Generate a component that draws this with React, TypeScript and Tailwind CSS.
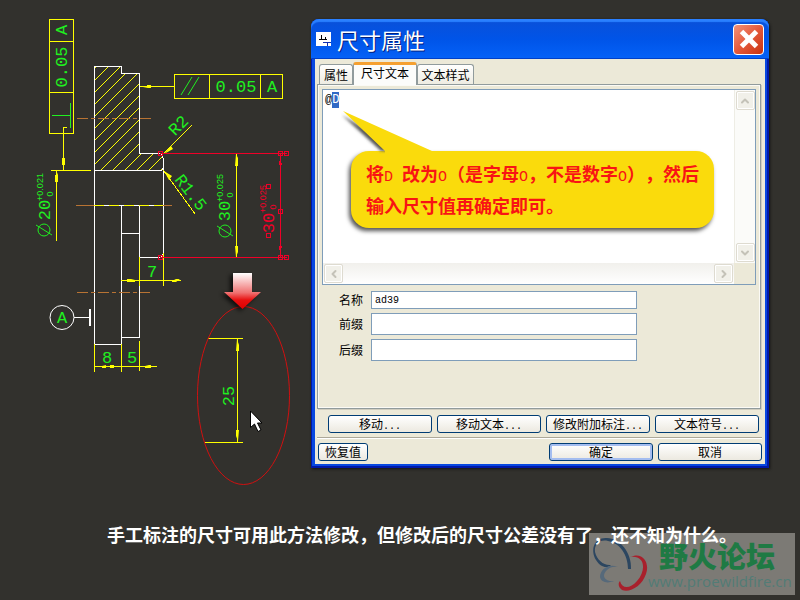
import * as React from 'react';
import { useEffect, useRef, useState } from 'react';
import { ChevronDown, ChevronLeft, ChevronRight, ChevronUp, X } from 'lucide-react';

const HATCH = Array.from({ length: 20 }, (_, i) => 163 + i * 12);

type NoteProps = {
  x: number;
  y: number;
  angle?: number;
  children: React.ReactNode;
};

// Dimension text, centred on x/y
function Note({ x, y, angle = 0, children }: NoteProps) {
  return (
    <text
      transform={`translate(${x} ${y}) rotate(${angle})`}
      fontSize={17}
      textAnchor="middle"
      dominantBaseline="central"
      stroke="none"
    >
      {children}
    </text>
  );
}

// Upper and lower deviation beside a dimension
function Tolerance({ x, y, children }: NoteProps) {
  return (
    <text
      transform={`translate(${x} ${y}) rotate(-90)`}
      fontSize={9}
      textAnchor="middle"
      dominantBaseline="central"
      stroke="none"
      className="font-['Liberation_Sans',sans-serif]"
    >
      {children}
    </text>
  );
}

function Diameter({ x, y }: { x: number; y: number }) {
  return (
    <g fill="none" stroke="#20f020">
      <circle cx={x} cy={y} r="6" />
      <path d={`M${x - 8} ${y - 5}L${x + 8} ${y + 5}`} />
    </g>
  );
}

function Handle({ x, y }: { x: number; y: number }) {
  return <rect x={x - 2} y={y - 2} width="4" height="4" fill="none" />;
}

function Drawing() {
  return (
    <svg
      width="310"
      height="500"
      viewBox="0 0 310 500"
      fill="none"
      className="shrink-0 font-['Liberation_Mono',monospace]"
      aria-label="零件图"
    >
      <defs>
        <clipPath id="section">
          <path d="M94 66H121V73H139V153H163V170H94Z" />
        </clipPath>
        <linearGradient id="pointer" x1="0" y1="0" x2="0" y2="1">
          <stop offset="0" stopColor="#fff" />
          <stop offset="0.55" stopColor="#f07070" />
          <stop offset="0.75" stopColor="#e81010" />
          <stop offset="1" stopColor="#e00000" />
        </linearGradient>
        <filter id="soft" x="-30%" y="-30%" width="160%" height="160%">
          <feGaussianBlur stdDeviation="2" />
        </filter>
      </defs>

      {/* Section hatch */}
      <g stroke="#ffff00" clipPath="url(#section)" shapeRendering="crispEdges">
        {HATCH.map((c) => (
          <path key={c} d={`M${c - 60} 60L${c - 180} 180`} />
        ))}
      </g>

      {/* Part outline */}
      <g stroke="#fff" shapeRendering="crispEdges">
        <path d="M94.5 344.5V66.5H121.5V73.5H139.5V153.5H160.5L163.5 158.5V167.5L161.5 170.5H94.5" />
        <path d="M163.5 158V253.5L161.5 257.5H139.5M94.5 344.5H121.5V205.5M139.5 205.5V337.5H121.5M121.5 233.5H139.5" />
        <path d="M74 317.5H90" />
        <path d="M90 309V326" strokeWidth="2" />
      </g>
      <circle cx="62" cy="317.5" r="12" stroke="#fff" />

      {/* Centre lines */}
      <g stroke="#b87333" shapeRendering="crispEdges">
        <path d="M77 118.5H152M77 292.5H150" strokeDasharray="11 3 4 3" />
        <path d="M76 205.5H172" />
        <path d="M94 205.5H163" stroke="#fff" />
        <path d="M94 205.5H163" stroke="#ffff00" strokeDasharray="10 5" />
      </g>

      {/* Dimension lines and frames */}
      <g stroke="#ffff00" shapeRendering="crispEdges">
        <path d="M49.5 19.5H73.5V133.5H49.5ZM49.5 41.5H73.5M49.5 92.5H73.5M67 127.5H63.5V170M51 170.5H91M56.5 170V241" />
        <path d="M174.5 74.5H282.5V98.5H174.5ZM209.5 74.5V98.5M260.5 74.5V98.5M174 86.5H140" />
        <path d="M191.5 125.5L163.5 153.5M163.5 170.5L195.5 214.5M236.5 153V257" />
        <path d="M121 280.5H181M139.5 257V286M163.5 253V286M94.5 344V372M121.5 344V372M139.5 341V371M94 366.5H157" />
        <path d="M208 338.5H243M205 442.5H243M237.5 338V442" />
      </g>
      <g fill="#ffff00">
        <path d="M62 158H65V165H64L63.5 170L63 165H62ZM55 182H58V175L56.5 171L56 175H55Z" />
        <path d="M151 85V88H148L143 87V86H147V85ZM164 154L171 146L173 149ZM164 171L172 176L169 180Z" />
        <path d="M236 154L235 166H238V158ZM236 257L235 246H238V252ZM237 339L236 351H239V345ZM238 441L239 430H236V436Z" />
        <path d="M127 279H131L135 280V282H127ZM180 279H176L172 281V282H176ZM102 366L106 365V368H102ZM110 365H114V368H110ZM145 366L149 365H151V368H145Z" />
      </g>

      {/* Green notes */}
      <g fill="#20f020">
        <Note x={62} y={30} angle={-90}>A</Note>
        <Note x={62} y={67} angle={-90}>0.05</Note>
        <Note x={236} y={87}>0.05</Note>
        <Note x={272} y={87}>A</Note>
        <Note x={62} y={318}>A</Note>
        <Note x={179} y={126} angle={-45}>R2</Note>
        <Note x={190} y={193} angle={52}>R1.5</Note>
        <Diameter x={44} y={230} />
        <Note x={45} y={210} angle={-90}>20</Note>
        <Tolerance x={40} y={187}>+0.021</Tolerance>
        <Tolerance x={50} y={194}>0</Tolerance>
        <Diameter x={225} y={231} />
        <Note x={225} y={211} angle={-90}>30</Note>
        <Tolerance x={220} y={188}>+0.025</Tolerance>
        <Tolerance x={230} y={195}>0</Tolerance>
        <Note x={152} y={272}>7</Note>
        <Note x={107} y={358}>8</Note>
        <Note x={132} y={358}>5</Note>
        <Note x={229} y={396} angle={-90}>25</Note>
        <path d="M70.5 103V128M52 115.5H70M181 95L192 77M188 95L199 77" stroke="#20f020" />
      </g>

      {/* Selected dimension */}
      <g stroke="#f00028" fill="#f00028" shapeRendering="crispEdges">
        <path d="M160 153.5H287M160 257.5H287M280.5 153V257" />
        <Handle x={160.5} y={153.5} />
        <Handle x={280.5} y={153.5} />
        <Handle x={286.5} y={153.5} />
        <Handle x={280.5} y={211.5} />
        <Handle x={160.5} y={257.5} />
        <Handle x={280.5} y={257.5} />
        <Handle x={286.5} y={257.5} />
        <Handle x={268.5} y={186.5} />
        <Handle x={268.5} y={235.5} />
        <path d="M280 158L279 165H282ZM280 253L279 246H282Z" stroke="none" />
        <Note x={269} y={223} angle={-90}>30</Note>
        <Tolerance x={263} y={199}>+0.025</Tolerance>
        <Tolerance x={273} y={207}>0</Tolerance>
      </g>

      {/* Highlight ellipse and its pointer */}
      <ellipse cx="243.5" cy="395.5" rx="46" ry="89" stroke="#d01010" />
      <path d="M230 275H249V294H258L240 311L221 294H230Z" fill="#000" opacity="0.7" filter="url(#soft)" />
      <path d="M233 273H252V292H261L242.500 309L224 292H233Z" fill="url(#pointer)" />

      {/* Mouse cursor */}
      <path d="M250.500 411V427.500L254.500 424L258 431.500L261 430L257.500 423H262Z" fill="#fff" stroke="#000" />
    </svg>
  );
}

function ScrollButton({ label, children }: { label: string; children: React.ReactNode }) {
  return (
    <button
      type="button"
      aria-label={label}
      className="flex size-[19px] shrink-0 items-center justify-center rounded-xs border border-[#dedbd0] bg-[#f1f0e9] text-[#c4c2b8] shadow-[inset_0_0_0_1px_#ffffff]"
    >
      {children}
    </button>
  );
}

type XpButtonProps = {
  wide?: boolean;
  primary?: boolean;
  more?: boolean;
  children: React.ReactNode;
};

function XpButton({ wide = true, primary = false, more = false, children }: XpButtonProps) {
  return (
    <button
      type="button"
      className={`h-[18px] rounded-[3px] border border-[#003c74] bg-linear-to-b from-white to-[#ece9e0] leading-4 whitespace-nowrap ${
        wide ? 'w-[104px]' : 'w-[50px]'
      } ${primary ? 'shadow-[inset_0_0_0_2px_#a4bdf0]' : ''}`}
    >
      {children}
      {more && <span className="font-['Liberation_Mono',monospace] text-[10px] leading-none">...</span>}
    </button>
  );
}

function Latin({ children }: { children: React.ReactNode }) {
  return (
    <span className="font-['Liberation_Mono',monospace] text-[15px] leading-none font-normal whitespace-pre">
      {children}
    </span>
  );
}

function Callout() {
  return (
    <div className="absolute top-[61px] left-[28px] h-[77px] w-[363px] rounded-[18px] bg-[#fadb0c] pt-[6px] pl-[15px] text-lg leading-[32px] font-bold whitespace-nowrap text-[#f81414] shadow-[-2px_3px_4px_#555555] [text-spacing-trim:space-all]">
      <svg
        width="96"
        height="48"
        viewBox="0 0 96 48"
        className="absolute -top-[42px] -left-[10px]"
        aria-hidden="true"
      >
        <defs>
          <filter id="tail">
            <feGaussianBlur stdDeviation="1.5" />
          </filter>
        </defs>
        <path d="M1 6L40 42H60Z" fill="#555" filter="url(#tail)" />
        <path d="M2 2L44 42V48H91V42Z" fill="#fadb0c" />
      </svg>
      <p>
        将<Latin>D </Latin>改为<Latin>O</Latin>&#xff08;是字母<Latin>O</Latin>&#xff0c;不是数字<Latin>O</Latin>&#xff09;&#xff0c;然后
      </p>
      <p>输入尺寸值再确定即可。</p>
    </div>
  );
}

function TextPane() {
  const [text, setText] = useState('@D');
  const ref = useRef<HTMLTextAreaElement>(null);

  useEffect(() => {
    ref.current?.focus();
    ref.current?.setSelectionRange(1, 2);
  }, []);

  return (
    <div className="relative border border-[#7f9db9] bg-[#ece9d8]">
      <div className="flex h-[173px]">
        <textarea
          ref={ref}
          aria-label="尺寸文本"
          value={text}
          onChange={(e) => setText(e.target.value)}
          className="min-w-0 flex-1 resize-none bg-white px-[2px] py-[2px] font-['Liberation_Mono',monospace] text-xs leading-4 outline-none selection:bg-[#316ac5] selection:text-white"
        />
        <div className="flex w-[21px] flex-col items-center justify-between border-l border-[#eeede5] bg-[#fbfbf9] py-px">
          <ScrollButton label="向上">
            <ChevronUp size={12} strokeWidth={4} />
          </ScrollButton>
          <ScrollButton label="向下">
            <ChevronDown size={12} strokeWidth={4} />
          </ScrollButton>
        </div>
      </div>
      <div className="mr-[21px] flex h-[21px] items-center justify-between bg-linear-to-b from-[#f1f0ec] to-white px-px">
        <ScrollButton label="向左">
          <ChevronLeft size={12} strokeWidth={4} />
        </ScrollButton>
        <ScrollButton label="向右">
          <ChevronRight size={12} strokeWidth={4} />
        </ScrollButton>
      </div>
      <Callout />
    </div>
  );
}

function Field({ id, label, value = '', short = false }: { id: string; label: string; value?: string; short?: boolean }) {
  return (
    <div className="flex items-center gap-2">
      <label htmlFor={id} className="w-[41px] text-right">
        {label}
      </label>
      <input
        id={id}
        defaultValue={value}
        className={`w-[266px] border border-[#7f9db9] bg-white px-[3px] font-['Liberation_Mono',monospace] text-[10px] outline-none ${
          short ? 'h-[18px]' : 'h-[22px]'
        }`}
      />
    </div>
  );
}

function Dialog() {
  return (
    <section
      aria-label="尺寸属性"
      className="mt-[19px] mr-[31px] ml-px min-w-0 flex-1 self-start rounded-t-lg bg-[#0848e0] px-1 pb-1 text-xs leading-4 text-black shadow-[inset_-2px_-2px_0_#0018a8,inset_1px_0_0_#0018a8,1px_1px_3px_#111111]"
    >
      <header className="-mx-1 flex h-10 items-center gap-[6px] rounded-t-lg bg-linear-to-b from-[#0a50d8] via-[#0054e8] to-[#0562f8] pr-[5px] pl-[5px] shadow-[inset_0_3px_1px_#2a80ff,inset_0_-1px_0_#0040c8]">
        <svg width="15" height="14" viewBox="0 0 15 14" aria-hidden="true">
          <path fill="#fff" d="M0 0H15V14H0Z" />
          <path d="M5.500 3V7.500M3 7.500H11M9.500 5V7" stroke="#000" fill="none" />
          <path d="M7 10.500H15M11.500 10V14" stroke="#1030b0" fill="none" />
        </svg>
        <h1 className="text-[22px] leading-8 text-white [text-shadow:1px_1px_0_#002080]">尺寸属性</h1>
        <button
          type="button"
          aria-label="关闭"
          className="ml-auto flex size-[31px] items-center justify-center rounded-[4px] border border-white bg-linear-to-br from-[#f09078] via-[#e4583a] to-[#c83008] text-white"
        >
          <X size={30} strokeWidth={4} strokeLinecap="butt" className="shrink-0" />
        </button>
      </header>

      <div className="bg-[#ece9d8] pt-[3px] pr-[3px] pb-[3px] pl-[2px]">
        <div role="tablist" className="relative z-10 -mb-px flex items-end px-[2px]">
          <button type="button" role="tab" aria-selected="false" className="mb-px h-5 w-[34px] rounded-t-[3px] border border-b-0 border-[#919b9c] bg-linear-to-b from-white to-[#eeece2]">
            属性
          </button>
          <button type="button" role="tab" aria-selected="true" className="h-[23px] w-[64px] rounded-t-[3px] border border-t-[3px] border-b-0 border-[#919b9c] border-t-[#f5a030] bg-[#fcfcfa] pb-1">
            尺寸文本
          </button>
          <button type="button" role="tab" aria-selected="false" className="mb-px h-5 w-[57px] rounded-t-[3px] border border-b-0 border-[#919b9c] bg-linear-to-b from-white to-[#eeece2] whitespace-nowrap">
            文本样式
          </button>
        </div>

        <div className="mr-px h-[325px] border border-[#919b9c] p-1 shadow-[inset_0_0_0_1px_#fbfaf5,1px_1px_0_#d0cdbf]">
          <TextPane />
          <div className="mt-[6px] flex flex-col gap-1">
            <Field id="name" label="名称" value="ad39" short />
            <Field id="prefix" label="前缀" />
            <Field id="suffix" label="后缀" />
          </div>
        </div>

        <div className="mt-[6px] flex justify-end gap-[5px] pr-[3px]">
          <XpButton more>移动</XpButton>
          <XpButton more>移动文本</XpButton>
          <XpButton more>修改附加标注</XpButton>
          <XpButton more>文本符号</XpButton>
        </div>
        <hr className="mt-1 border-[#aca899] shadow-[0_1px_0_#ffffff]" />
        <div className="mt-[5px] flex gap-[5px] pl-px">
          <XpButton wide={false}>恢复值</XpButton>
          <div className="flex-1" />
          <XpButton primary>确定</XpButton>
          <XpButton>取消</XpButton>
        </div>
      </div>
    </section>
  );
}

function Watermark() {
  return (
    <aside className="absolute right-[5px] bottom-[5px] flex h-[62px] w-[206px] bg-[#7c7a75]">
      <svg width="59" height="62" viewBox="0 0 59 62" fill="none" className="shrink-0" aria-hidden="true">
        <path d="M42 36C43 20 31 5 18 5C5 4 1 17 7 27C11 34 18 36 22 32C15 33 8 27 6 19C5 11 11 6 19 8C31 10 39 22 39 36Z" fill="#2c4660" />
        <path d="M29 34C20 30 11 36 11 44C12 49 18 51 25 48C17 49 12 44 17 38C20 34 25 33 29 34Z" fill="#56697a" />
        <path d="M41 24C54 18 61 30 57 41C53 53 41 60 33 57C29 54 29 50 31 48C33 56 41 56 48 48C57 38 57 22 41 24Z" fill="#a8202c" />
      </svg>
      <div className="flex flex-col pt-[6px] whitespace-nowrap">
        <strong className="pl-[11px] text-[29px] leading-8 font-black text-[#1f7a44]">野火论坛</strong>
        <a href="#" className="font-['Open_Sans',sans-serif] text-[15px] leading-5 text-[#527c76]">
          www.proewildfire.cn
        </a>
      </div>
    </aside>
  );
}

export default function App() {
  return (
    <main
      lang="zh-CN"
      className="relative min-h-screen overflow-hidden bg-[#32312d] font-['Noto_Sans_CJK_SC',sans-serif]"
    >
      <div className="flex">
        <Drawing />
        <Dialog />
      </div>
      <Watermark />
      <p className="relative mt-6 pl-[107px] text-lg leading-5 font-bold whitespace-nowrap text-white">
        手工标注的尺寸可用此方法修改&#xff0c;但修改后的尺寸公差没有了&#xff0c;还不知为什么。
      </p>
    </main>
  );
}
